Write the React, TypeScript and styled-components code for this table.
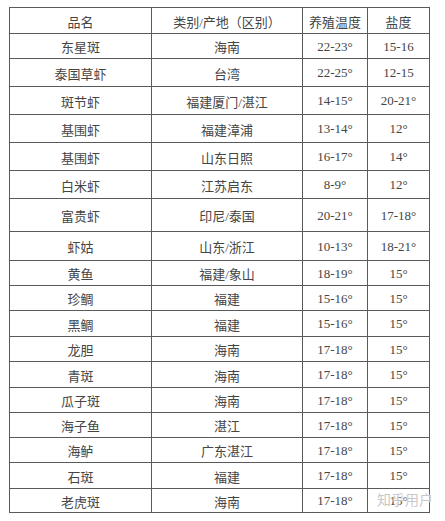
import styled, { createGlobalStyle } from "styled-components";

const GlobalStyle = createGlobalStyle`
  html, body {
    margin: 0;
    padding: 0;
    background: #ffffff;
  }
  body {
    font-family: "Liberation Serif", "Noto Sans CJK SC", serif;
  }
`;

interface IRow {
  name: string;
  origin: string;
  temp: string;
  salt: string;
  h: number;
}

const rows: IRow[] = [
  { name: "东星斑", origin: "海南", temp: "22-23°", salt: "15-16", h: 25 },
  { name: "泰国草虾", origin: "台湾", temp: "22-25°", salt: "12-15", h: 28 },
  { name: "斑节虾", origin: "福建厦门/湛江", temp: "14-15°", salt: "20-21°", h: 28 },
  { name: "基围虾", origin: "福建漳浦", temp: "13-14°", salt: "12°", h: 28 },
  { name: "基围虾", origin: "山东日照", temp: "16-17°", salt: "14°", h: 28 },
  { name: "白米虾", origin: "江苏启东", temp: "8-9°", salt: "12°", h: 28 },
  { name: "富贵虾", origin: "印尼/泰国", temp: "20-21°", salt: "17-18°", h: 33 },
  { name: "虾姑", origin: "山东/浙江", temp: "10-13°", salt: "18-21°", h: 29 },
  { name: "黄鱼", origin: "福建/象山", temp: "18-19°", salt: "15°", h: 25 },
  { name: "珍鲷", origin: "福建", temp: "15-16°", salt: "15°", h: 25 },
  { name: "黑鲷", origin: "福建", temp: "15-16°", salt: "15°", h: 26 },
  { name: "龙胆", origin: "海南", temp: "17-18°", salt: "15°", h: 25 },
  { name: "青斑", origin: "海南", temp: "17-18°", salt: "15°", h: 26 },
  { name: "瓜子斑", origin: "海南", temp: "17-18°", salt: "15°", h: 25 },
  { name: "海子鱼", origin: "湛江", temp: "17-18°", salt: "15°", h: 25 },
  { name: "海鲈", origin: "广东湛江", temp: "17-18°", salt: "15°", h: 25 },
  { name: "石斑", origin: "福建", temp: "17-18°", salt: "15°", h: 26 },
  { name: "老虎斑", origin: "海南", temp: "17-18°", salt: "15°", h: 24 },
];

const Page = styled.div`
  position: relative;
  width: 445px;
  height: 521px;
  padding: 7px 0 0 9px;
  box-sizing: border-box;
`;

const Table = styled.div`
  display: flex;
  flex-direction: column;
  width: 421px;
  border-top: 1px solid #5a5a5a;
  border-left: 1px solid #5a5a5a;
  box-sizing: border-box;
`;

const Row = styled.div<{ $h: number }>`
  display: grid;
  grid-template-columns: 142px 151px 65px 62px;
  height: ${(p) => p.$h}px;
`;

const Cell = styled.div`
  display: flex;
  align-items: center;
  justify-content: center;
  box-sizing: border-box;
  border-right: 1px solid #5a5a5a;
  border-bottom: 1px solid #5a5a5a;
  font-size: 13px;
  color: #454545;
  white-space: nowrap;
  padding-top: 1px;
`;

// zhihu watermark sits over the last row, like in the screenshot
const Watermark = styled.div`
  position: absolute;
  left: 377px;
  top: 489px;
  font-family: "Noto Sans CJK SC", sans-serif;
  font-size: 14px;
  color: rgba(185, 185, 185, 0.8);
  text-shadow: 0 0 2px #ffffff, 0 0 1px #ffffff;
`;

export default function App() {
  return (
    <Page>
      <GlobalStyle />
      <Table>
        <Row $h={26}>
          <Cell>品名</Cell>
          <Cell>类别/产地（区别）</Cell>
          <Cell>养殖温度</Cell>
          <Cell>盐度</Cell>
        </Row>
        {rows.map((r, i) => (
          <Row key={i} $h={r.h}>
            <Cell>{r.name}</Cell>
            <Cell>{r.origin}</Cell>
            <Cell>{r.temp}</Cell>
            <Cell>{r.salt}</Cell>
          </Row>
        ))}
      </Table>
      <Watermark>知乎用户</Watermark>
    </Page>
  );
}
